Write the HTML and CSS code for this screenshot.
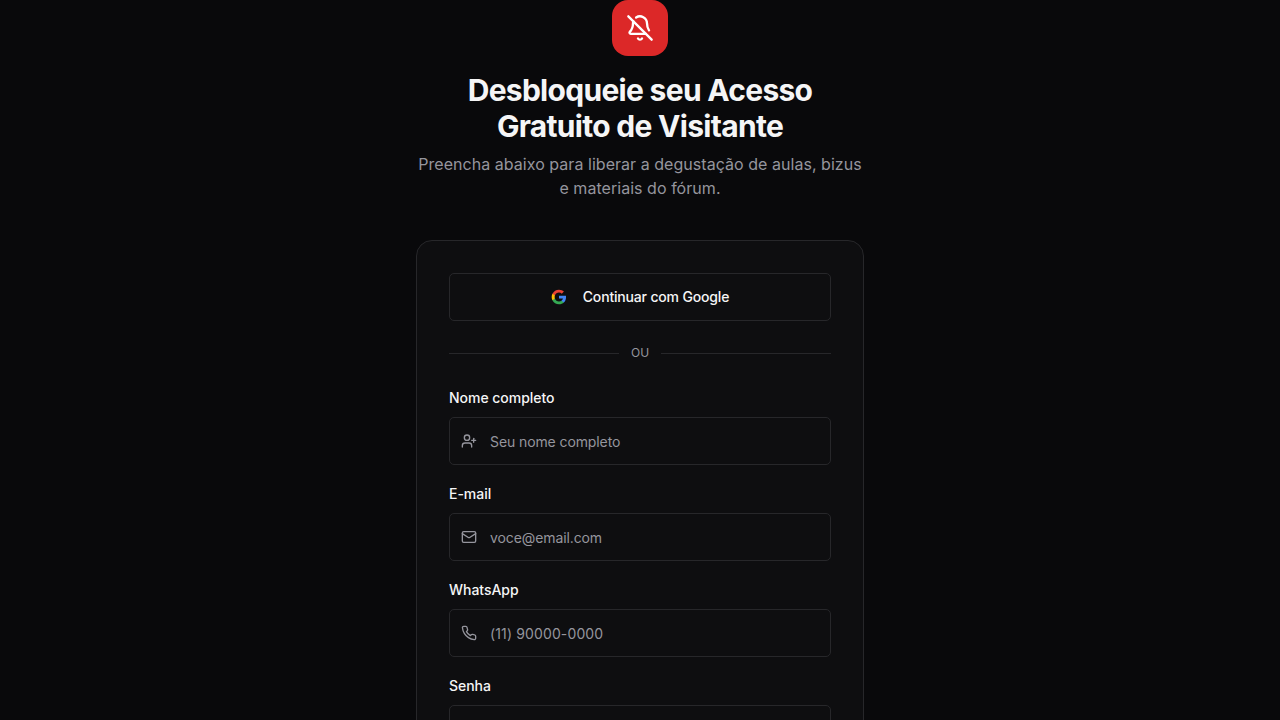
FILE: index.html
```html
<!DOCTYPE html>
<html lang="pt-BR">
<head>
  <meta charset="UTF-8">
  <meta name="viewport" content="width=device-width, initial-scale=1.0">
  <title>Acesso Gratuito de Visitante</title>
  <link rel="stylesheet" href="styles.css">
</head>
<body>
  <main class="container">
    <header class="header">
      <div class="logo">
        <svg class="icon" viewBox="0 0 24 24" width="28" height="28">
          <path d="M10.268 21a2 2 0 0 0 3.464 0"/>
          <path d="M17 17H4a1 1 0 0 1-.74-1.673C4.59 13.956 6 12.499 6 8a6 6 0 0 1 .258-1.742"/>
          <path d="m2 2 20 20"/>
          <path d="M8.668 3.01A6 6 0 0 1 18 8c0 2.687.77 4.653 1.707 6.05"/>
        </svg>
      </div>
      <h1>Desbloqueie seu Acesso Gratuito de Visitante</h1>
      <p class="subtitle">Preencha abaixo para liberar a degustação de aulas, bizus e materiais do fórum.</p>
    </header>

    <section class="card">
      <button type="button" class="google-btn">
        <svg viewBox="0 0 24 24" width="16" height="16">
          <path fill="#4285F4" d="M22.56 12.25c0-.78-.07-1.53-.2-2.25H12v4.26h5.92c-.26 1.37-1.04 2.53-2.21 3.31v2.77h3.57c2.08-1.92 3.28-4.74 3.28-8.09z"/>
          <path fill="#34A853" d="M12 23c2.97 0 5.46-.98 7.28-2.66l-3.57-2.77c-.98.66-2.23 1.06-3.71 1.06-2.86 0-5.29-1.93-6.16-4.53H2.18v2.84C3.99 20.53 7.7 23 12 23z"/>
          <path fill="#FBBC05" d="M5.84 14.09c-.22-.66-.35-1.36-.35-2.09s.13-1.43.35-2.09V7.07H2.18C1.43 8.55 1 10.22 1 12s.43 3.45 1.18 4.93l3.66-2.84z"/>
          <path fill="#EA4335" d="M12 5.38c1.62 0 3.06.56 4.21 1.64l3.15-3.15C17.45 2.09 14.97 1 12 1 7.7 1 3.99 3.47 2.18 7.07l3.66 2.84c.87-2.6 3.3-4.53 6.16-4.53z"/>
        </svg>
        Continuar com Google
      </button>

      <div class="divider">OU</div>

      <form class="form">
        <div class="field">
          <label for="nome">Nome completo</label>
          <div class="input-box">
            <svg class="icon" viewBox="0 0 24 24" width="16" height="16">
              <path d="M16 21v-2a4 4 0 0 0-4-4H6a4 4 0 0 0-4 4v2"/>
              <circle cx="9" cy="7" r="4"/>
              <path d="M19 8v6"/>
              <path d="M22 11h-6"/>
            </svg>
            <input type="text" id="nome" placeholder="Seu nome completo">
          </div>
        </div>

        <div class="field">
          <label for="email">E-mail</label>
          <div class="input-box">
            <svg class="icon" viewBox="0 0 24 24" width="16" height="16">
              <rect x="2" y="4" width="20" height="16" rx="2"/>
              <path d="m22 7-8.97 5.7a1.94 1.94 0 0 1-2.06 0L2 7"/>
            </svg>
            <input type="email" id="email" placeholder="voce@email.com">
          </div>
        </div>

        <div class="field">
          <label for="whatsapp">WhatsApp</label>
          <div class="input-box">
            <svg class="icon" viewBox="0 0 24 24" width="16" height="16">
              <path d="M22 16.92v3a2 2 0 0 1-2.18 2 19.79 19.79 0 0 1-8.63-3.07 19.5 19.5 0 0 1-6-6 19.79 19.79 0 0 1-3.07-8.67A2 2 0 0 1 4.11 2h3a2 2 0 0 1 2 1.72 12.84 12.84 0 0 0 .7 2.81 2 2 0 0 1-.45 2.11L8.09 9.91a16 16 0 0 0 6 6l1.27-1.27a2 2 0 0 1 2.11-.45 12.84 12.84 0 0 0 2.81.7A2 2 0 0 1 22 16.92z"/>
            </svg>
            <input type="tel" id="whatsapp" placeholder="(11) 90000-0000">
          </div>
        </div>

        <div class="field">
          <label for="senha">Senha</label>
          <div class="input-box">
            <input type="password" id="senha">
          </div>
        </div>
      </form>
    </section>
  </main>
</body>
</html>
```
FILE: styles.css
```css
* {
  box-sizing: border-box;
}

body {
  margin: 0;
  background-color: #09090b;
  color: #f5f5f6;
  font-family: Inter, sans-serif;
  font-size: 14px;
  line-height: 20px;
}

.container {
  width: 448px;
  height: 100vh;
  margin: 0 auto;
  overflow: hidden;
}

.header {
  display: flex;
  flex-direction: column;
  align-items: center;
  margin-bottom: 40px;
  text-align: center;
}

.logo {
  display: flex;
  align-items: center;
  justify-content: center;
  width: 56px;
  height: 56px;
  margin-bottom: 16px;
  border-radius: 16px;
  background-color: #dc2828;
  color: #fff;
}

.icon {
  flex-shrink: 0;
  fill: none;
  stroke: currentColor;
  stroke-width: 2;
  stroke-linecap: round;
  stroke-linejoin: round;
}

h1 {
  margin: 0 0 8px;
  font-size: 30px;
  font-weight: 680;
  line-height: 36px;
  letter-spacing: -0.7px;
}

.subtitle {
  margin: 0;
  color: #95959d;
  font-size: 16px;
  line-height: 24px;
  letter-spacing: 0.04px;
}

.card {
  padding: 32px;
  border: 1px solid #27272a;
  border-radius: 16px;
  background-color: #0e0e10;
}

.google-btn {
  display: flex;
  align-items: center;
  justify-content: center;
  gap: 16px;
  width: 100%;
  height: 48px;
  border: 1px solid #27272a;
  border-radius: 5px;
  background-color: transparent;
  color: inherit;
  font: inherit;
  font-weight: 480;
  letter-spacing: -0.17px;
  cursor: pointer;
}

.divider {
  display: flex;
  align-items: center;
  gap: 12px;
  margin: 24px 0 27px;
  color: #95959d;
  font-size: 12px;
  line-height: 16px;
}

.divider::before,
.divider::after {
  content: "";
  flex: 1;
  height: 1px;
  background-color: #27272a;
}

.form {
  display: flex;
  flex-direction: column;
  gap: 19px;
}

.field {
  display: flex;
  flex-direction: column;
  gap: 9px;
}

label {
  font-weight: 480;
  letter-spacing: -0.03px;
}

.input-box {
  display: flex;
  align-items: center;
  gap: 13px;
  height: 48px;
  padding: 0 11px;
  border: 1px solid #27272a;
  border-radius: 5px;
  color: #95959d;
}

.input-box input {
  flex: 1;
  height: 100%;
  padding: 0;
  border: none;
  outline: none;
  background: none;
  color: #f5f5f6;
  font: inherit;
}

.input-box input::placeholder {
  color: #95959d;
  letter-spacing: -0.1px;
}

#whatsapp::placeholder {
  letter-spacing: 0.13px;
}
```
